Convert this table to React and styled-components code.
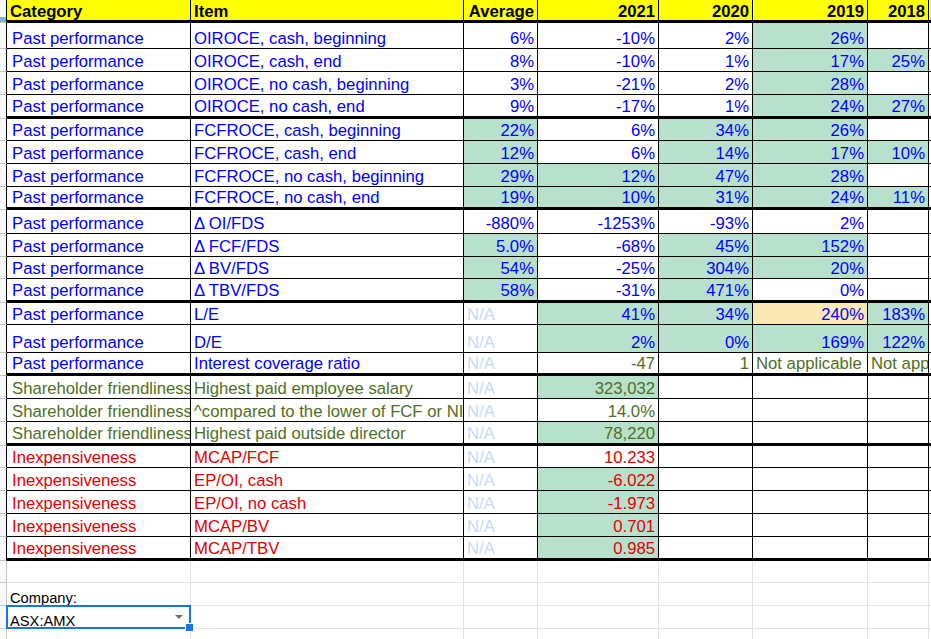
import React from 'react';
import styled, { createGlobalStyle } from 'styled-components';

const GlobalStyle = createGlobalStyle`
  html, body {
    margin: 0;
    padding: 0;
    background: #fff;
    overflow: hidden;
  }
  body {
    font-family: "Liberation Sans", Arial, sans-serif;
  }
`;

const FILL = { g: '#b7e1cd', o: '#fce8b2' };
const TONE = {
  blue: '#0000ff',
  olive: '#4f7022',
  red: '#e00000',
  na: '#c9daf8',
  black: '#000000',
};
const COLS = [7, 184, 273, 74, 121, 94, 115, 61, 120];

const Viewport = styled.div`
  width: 931px;
  height: 639px;
  overflow: hidden;
`;

const Sheet = styled.table`
  border-collapse: separate;
  border-spacing: 0;
  table-layout: fixed;
  width: ${COLS.reduce((a, b) => a + b, 0)}px;
  font-size: 16.7px;
  line-height: 18px;
`;

const Row = styled.tr`
  height: ${p => p.$h}px;
`;

const Gutter = styled.td`
  background: #f8f9fa;
  border-right: 1px solid ${p => (p.$edge ? '#000' : '#c4c7c5')};
  border-bottom: 1px solid #c4c7c5;
  padding: 0;
  box-shadow: ${p => (p.$mark ? 'inset 0 -5px 0 #7baaf7' : 'none')};
`;

const HeadCell = styled.td`
  background: #ffff00;
  color: #000;
  font-weight: bold;
  line-height: 16px;
  text-align: ${p => p.$align || 'left'};
  vertical-align: bottom;
  padding: 0 3px;
  border-right: ${p => (p.$last ? 'none' : '1px solid #000')};
  border-bottom: 3px solid #000;
  white-space: nowrap;
  overflow: hidden;
`;

const Cell = styled.td`
  background: ${p => FILL[p.$fill] || '#fff'};
  color: ${p => TONE[p.$tone] || '#000'};
  text-align: ${p => p.$align || 'left'};
  vertical-align: bottom;
  padding: 0 3px 0 ${p => (p.$indent ? 5 : 3)}px;
  border-right: ${p => (p.$last ? 'none' : '1px solid #000')};
  border-bottom: ${p => (p.$thick ? 3 : 1)}px solid #000;
  white-space: nowrap;
  overflow: hidden;
`;

const GridCell = styled.td`
  background: #fff;
  color: #000;
  font-size: 14.7px;
  line-height: 14px;
  vertical-align: bottom;
  padding: 0 3px;
  border-right: 1px solid #e2e3e3;
  border-bottom: 1px solid #e2e3e3;
  white-space: nowrap;
  overflow: ${p => (p.$selected ? 'visible' : 'hidden')};
  position: ${p => (p.$selected ? 'relative' : 'static')};
`;

const Selection = styled.div`
  position: absolute;
  top: -1px;
  left: -1px;
  right: -1px;
  bottom: -1px;
  border: 2px solid #1a73e8;
  pointer-events: none;
`;

const Handle = styled.div`
  position: absolute;
  right: -4px;
  bottom: -4px;
  width: 7px;
  height: 7px;
  background: #1a73e8;
  border: 1px solid #fff;
`;

const Picker = styled.div`
  display: flex;
  align-items: center;
  justify-content: space-between;
  padding-right: 4px;
`;

const Caret = styled.span`
  width: 0;
  height: 0;
  border-left: 4px solid transparent;
  border-right: 4px solid transparent;
  border-top: 4px solid #6f6f6f;
  margin-bottom: 8px;
`;

const g = t => ({ t, fill: 'g' });
const o = t => ({ t, fill: 'o' });
const NA = { t: 'N/A', tone: 'na', align: 'left' };
const ol = (t, align) => ({ t, tone: 'olive', align });

const PP = 'Past performance';
const SF = 'Shareholder friendliness';
const IX = 'Inexpensiveness';

const rows = [
  { h: 26, tone: 'blue', cat: PP, item: 'OIROCE, cash, beginning', v: ['6%', '-10%', '2%', g('26%'), ''] },
  { h: 23, tone: 'blue', cat: PP, item: 'OIROCE, cash, end', v: ['8%', '-10%', '1%', g('17%'), g('25%')] },
  { h: 23, tone: 'blue', cat: PP, item: 'OIROCE, no cash, beginning', v: ['3%', '-21%', '2%', g('28%'), ''] },
  { h: 24, tone: 'blue', thick: true, cat: PP, item: 'OIROCE, no cash, end', v: ['9%', '-17%', '1%', g('24%'), g('27%')] },
  { h: 22, tone: 'blue', cat: PP, item: 'FCFROCE, cash, beginning', v: [g('22%'), '6%', g('34%'), g('26%'), ''] },
  { h: 23, tone: 'blue', cat: PP, item: 'FCFROCE, cash, end', v: [g('12%'), '6%', g('14%'), g('17%'), g('10%')] },
  { h: 23, tone: 'blue', cat: PP, item: 'FCFROCE, no cash, beginning', v: [g('29%'), g('12%'), g('47%'), g('28%'), ''] },
  { h: 23, tone: 'blue', thick: true, cat: PP, item: 'FCFROCE, no cash, end', v: [g('19%'), g('10%'), g('31%'), g('24%'), g('11%')] },
  { h: 24, tone: 'blue', cat: PP, item: 'Δ OI/FDS', v: ['-880%', '-1253%', '-93%', '2%', ''] },
  { h: 23, tone: 'blue', cat: PP, item: 'Δ FCF/FDS', v: [g('5.0%'), '-68%', g('45%'), g('152%'), ''] },
  { h: 22, tone: 'blue', cat: PP, item: 'Δ BV/FDS', v: [g('54%'), '-25%', g('304%'), g('20%'), ''] },
  { h: 24, tone: 'blue', thick: true, cat: PP, item: 'Δ TBV/FDS', v: [g('58%'), '-31%', g('471%'), '0%', ''] },
  { h: 22, tone: 'blue', cat: PP, item: 'L/E', v: [NA, g('41%'), g('34%'), o('240%'), g('183%')] },
  { h: 28, tone: 'blue', cat: PP, item: 'D/E', v: [NA, g('2%'), g('0%'), g('169%'), g('122%')] },
  {
    h: 23, tone: 'blue', thick: true, cat: PP, item: 'Interest coverage ratio',
    v: [NA, ol('-47'), ol('1'), ol('Not applicable', 'left'), ol('Not applicable', 'left')],
  },
  { h: 23, tone: 'olive', cat: SF, item: 'Highest paid employee salary', v: [NA, g('323,032'), '', '', ''] },
  { h: 23, tone: 'olive', cat: SF, item: '^compared to the lower of FCF or NI', v: [NA, '14.0%', '', '', ''] },
  { h: 24, tone: 'olive', thick: true, cat: SF, item: 'Highest paid outside director', v: [NA, g('78,220'), '', '', ''] },
  { h: 22, tone: 'red', cat: IX, item: 'MCAP/FCF', v: [NA, '10.233', '', '', ''] },
  { h: 23, tone: 'red', cat: IX, item: 'EP/OI, cash', v: [NA, g('-6.022'), '', '', ''] },
  { h: 23, tone: 'red', cat: IX, item: 'EP/OI, no cash', v: [NA, g('-1.973'), '', '', ''] },
  { h: 23, tone: 'red', cat: IX, item: 'MCAP/BV', v: [NA, g('0.701'), '', '', ''] },
  { h: 24, tone: 'red', thick: true, cat: IX, item: 'MCAP/TBV', v: [NA, g('0.985'), '', '', ''] },
];

const headers = [
  { t: 'Category' },
  { t: 'Item' },
  { t: 'Average', align: 'right' },
  { t: '2021', align: 'right' },
  { t: '2020', align: 'right' },
  { t: '2019', align: 'right' },
  { t: '2018', align: 'right' },
  { t: '', last: true },
];

const DataRow = ({ row }) => (
  <Row $h={row.h}>
    <Gutter $edge />
    <Cell $tone={row.tone} $thick={row.thick} $indent>{row.cat}</Cell>
    <Cell $tone={row.tone} $thick={row.thick}>{row.item}</Cell>
    {row.v.map((raw, i) => {
      const c = typeof raw === 'string' ? { t: raw } : raw;
      return (
        <Cell
          key={i}
          $fill={c.fill}
          $tone={c.tone || row.tone}
          $align={c.align || 'right'}
          $thick={row.thick}
        >
          {c.t}
        </Cell>
      );
    })}
    <Cell $last $thick={row.thick} />
  </Row>
);

const EmptyCells = ({ from = 0 }) =>
  COLS.slice(1 + from).map((_, i) => <GridCell key={i} />);

export default function App() {
  return (
    <>
      <GlobalStyle />
      <Viewport>
        <Sheet>
          <colgroup>
            {COLS.map((w, i) => (
              <col key={i} style={{ width: w }} />
            ))}
          </colgroup>
          <tbody>
            <Row $h={23}>
              <Gutter $edge $mark />
              {headers.map((h, i) => (
                <HeadCell key={i} $align={h.align} $last={h.last}>
                  {h.t}
                </HeadCell>
              ))}
            </Row>
            {rows.map((r, i) => (
              <DataRow key={i} row={r} />
            ))}
            <Row $h={22}>
              <Gutter />
              <EmptyCells />
            </Row>
            <Row $h={23}>
              <Gutter />
              <GridCell>Company:</GridCell>
              <EmptyCells from={1} />
            </Row>
            <Row $h={23}>
              <Gutter />
              <GridCell $selected>
                <Picker>
                  <span>ASX:AMX</span>
                  <Caret />
                </Picker>
                <Selection />
                <Handle />
              </GridCell>
              <EmptyCells from={1} />
            </Row>
            <Row $h={23}>
              <Gutter />
              <EmptyCells />
            </Row>
          </tbody>
        </Sheet>
      </Viewport>
    </>
  );
}
